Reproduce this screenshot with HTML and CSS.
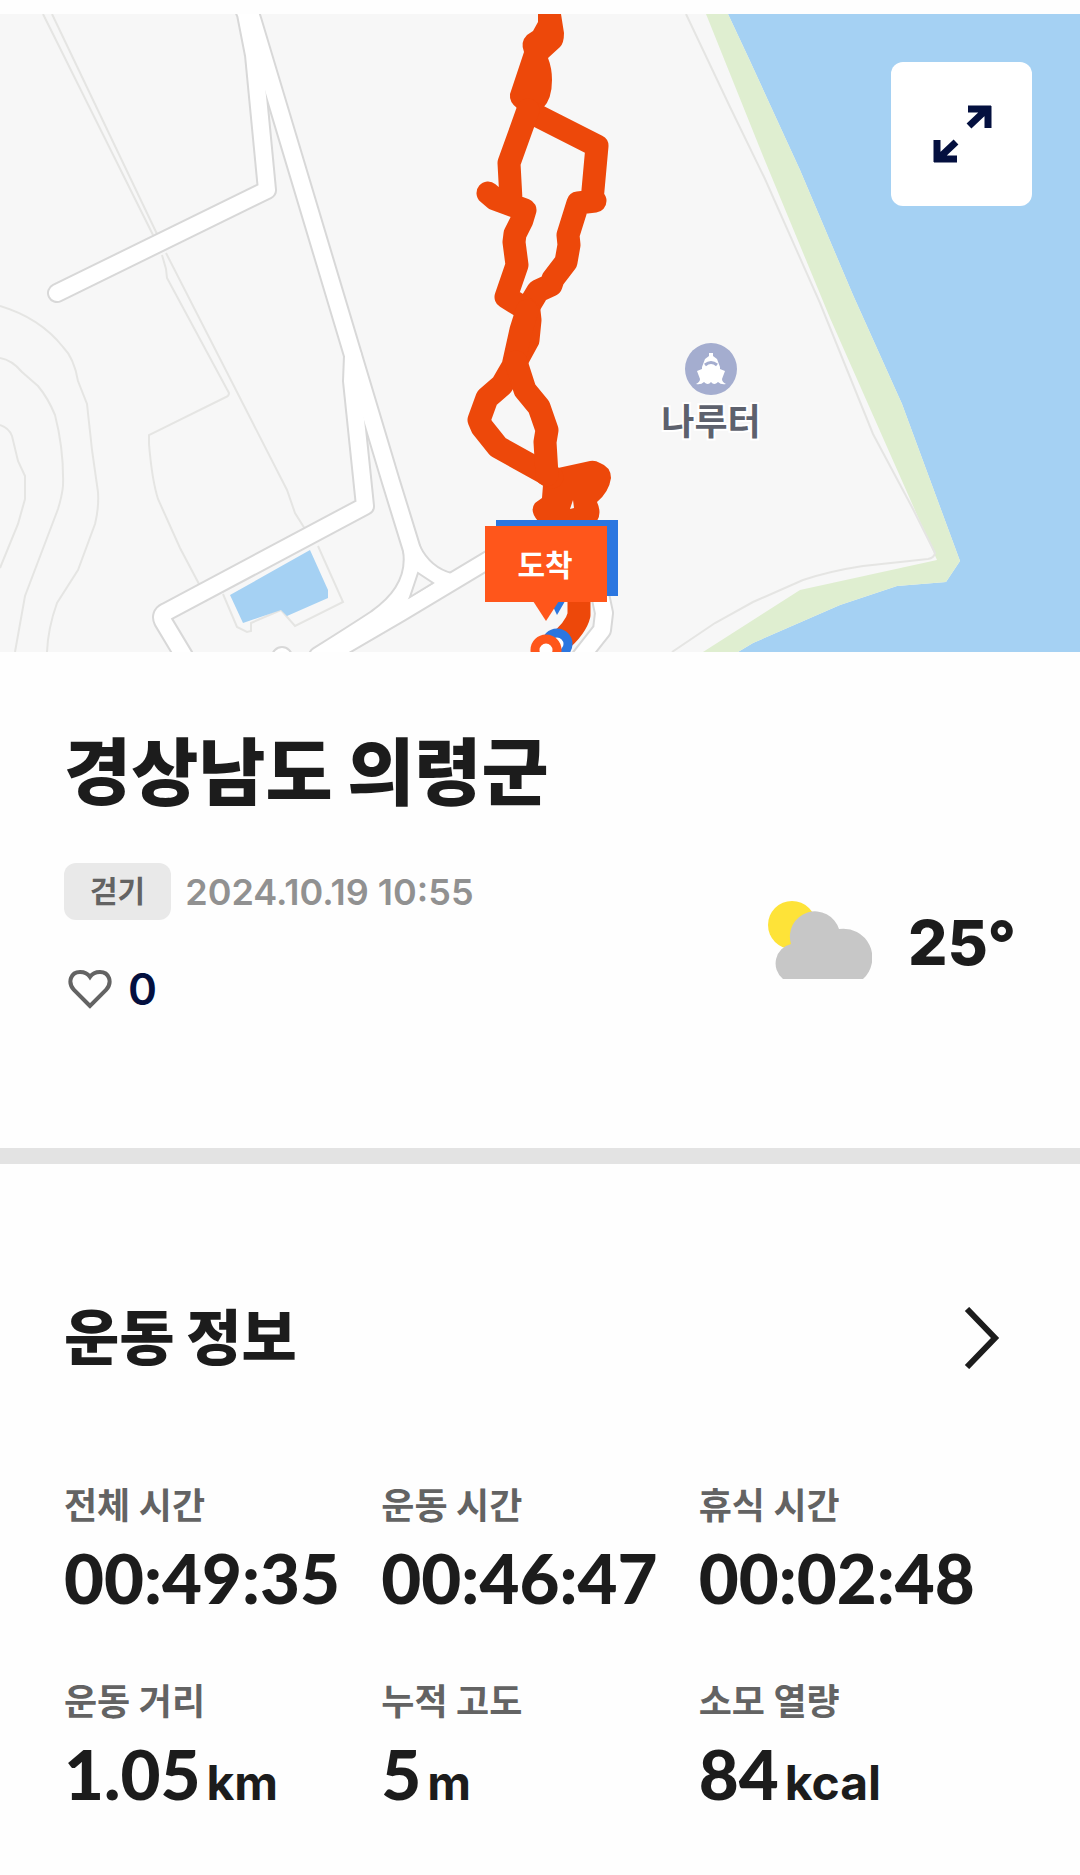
FILE: index.html
```html
<!DOCTYPE html>
<html lang="ko">
<head>
    <meta charset="UTF-8">
    <meta name="viewport" content="width=device-width, initial-scale=1.0">
    <title>경상남도 의령군 - 운동 기록</title>
    <link rel="stylesheet" href="styles.css">
</head>
<body>
    <div class="map">
        <svg class="map-canvas" viewBox="0 14 1080 638" role="img" aria-label="운동 경로 지도">
            <rect class="land" x="0" y="14" width="1080" height="638"/>

            <!-- Water and shore -->
            <path class="water" d="M728 14 L750 61 L800 170 L853 295 L902 404 L960 561 L946 582 L897 586 L840 605 L753 643 L738 652 H1080 V14 Z"/>
            <path class="shore" d="M706 14 H728 L750 61 L800 170 L853 295 L902 404 L960 561 L946 582 L897 586 L840 605 L753 643 L738 652 H703 L800 590 L937 560 L830 318 L763 156 Z"/>

            <!-- Contour lines -->
            <g class="contour">
                <path d="M686 14 L730 107 L765 179 L820 303 L873 434 L913 509 L935 553 Q934 558 928 559 L863 566 Q830 571 803 580 L753 602 L715 623 L672 652"/>
                <path d="M43 14 L153 235 M52 14 L157 234"/>
                <path d="M162 255 L166 269 L167 278 L229 393 Q229 396 226 397 L149 435 L149 444 Q152 480 158 499 L180 548 L199 584"/>
                <path d="M166 253 L287 490 L295 513 L305 529"/>
                <path d="M0 306 Q40 318 63 347 Q74 358 78 381 L87 404 L92 450 L98 492 Q99 508 95 524 L78 570 L57 603 Q48 628 47 652"/>
                <path d="M0 358 Q12 360 22 372 L38 386 Q48 398 55 415 Q64 450 63 486 Q62 496 58 509 L25 596 L15 652"/>
                <path d="M0 425 Q9 428 12 436 L18 461 L25 476 L25 499 L18 524 L0 568"/>
                <path d="M223 594 L237 627 L247 632 L251 631 L251 623 L281 610 L295 626 L343 602 L318 546"/>
            </g>
            <path class="water" d="M230 595 L310 550 L328 590 V598 L287 616 L281 610 L243 623 Z"/>

            <!-- Roads: outline first, then white fill on top -->
            <g class="road-edge">
                <path d="M57 293 L267 190 L254 55 L246 14 L240 0"/>
                <path d="M244 -6 L253 22 L391 482 L412 550 Q424 575 450 582"/>
                <path d="M412 550 Q418 590 376 619 Q350 636 318 656"/>
                <path d="M500 553 L400 613 L326 656"/>
                <path d="M353 356 L352 381 L365 506 L166 612 Q160 615 163 621 L184 656"/>
                <path d="M597 580 L604 613 L602 630 L580 658"/>
                <circle class="road-dot" cx="282" cy="657" r="10"/>
            </g>
            <g class="road">
                <path d="M57 293 L267 190 L254 55 L246 14 L240 0"/>
                <path d="M244 -6 L253 22 L391 482 L412 550 Q424 575 450 582"/>
                <path d="M412 550 Q418 590 376 619 Q350 636 318 656"/>
                <path d="M500 553 L400 613 L326 656"/>
                <path d="M353 356 L352 381 L365 506 L166 612 Q160 615 163 621 L184 656"/>
                <path d="M597 580 L604 613 L602 630 L580 658"/>
            </g>
            <path class="island" d="M418 573 L433 583 L410 597 Z"/>

            <!-- Ferry landing -->
            <circle class="poi" cx="711" cy="369" r="26"/>
            <path class="poi-icon" d="M709 356 V353 H713 V356 L717 359 L720 367 V369 L725 371 L722 379 Q722 382 726 384 Q721 385 718 382 Q714 386 711 382 Q708 386 704 382 Q701 385 696 384 Q700 382 700 379 L697 371 L702 369 V367 L705 359 Z"/>
            <path class="poi-bow" d="M705 365 Q711 360 717 365"/>
            <text class="poi-label" x="711" y="435">나루터</text>

            <!-- Walked route -->
            <path class="route-area" d="M538 14 H561 L564 33 Q564 43 560 47 L548 58 Q552 68 552 80 Q552 99 543 108 L532 120 L517 108 Q509 102 510 94 L524 52 Q520 42 527 35 L533 31 L538 22 Z"/>
            <path class="route-area" d="M558 468 L590 461 Q595 460 600 463 Q611 467 611 478 Q609 492 597 502 Q602 513 597 521 H538 Q529 511 535 503 L542 498 L543 485 L535 470 L547 455 Z"/>
            <path class="route" d="M530 112 L597 146 L592 201 H595 L578 203 L568 235 L569 245 L566 262 L553 279 L551 285 L538 291 L526 311"/>
            <path class="route" d="M528 110 L509 163 L511 200 M488 193 L495 199 L525 210 L522 220 L515 234 L514 242 L517 265 L506 297 L529 311 L530 320 L528 340 L516 362"/>
            <path class="route" d="M527 311 L521 330 L513 366 L502 385 L487 398 L479 420 L482 427 L498 447 L552 477"/>
            <path class="route" d="M516 362 L525 390 L539 407 L547 430 L545 442 L547 475"/>
            <path class="route" d="M579 590 V615 Q576 628 558 643"/>
            <path class="route-gap" d="M573 500 L574 508 L570 509 Z"/>

            <!-- Start marker, mostly hidden under the finish marker -->
            <g class="marker-start">
                <rect x="496" y="520" width="122" height="76"/>
                <path d="M548 596 H568 L557 615 Z"/>
                <circle class="marker-ring" cx="557" cy="644" r="11"/>
            </g>
            <g class="marker-finish">
                <rect x="485" y="526" width="122" height="76"/>
                <path d="M533 601 H559 L546 621 Z"/>
                <circle class="marker-ring" cx="546" cy="650" r="11"/>
            </g>
            <text class="marker-label" x="545" y="576">도착</text>
        </svg>

        <button type="button" class="expand-button" aria-label="지도 크게 보기">
            <svg viewBox="0 0 60 60" width="60" height="60">
                <path d="M36 5 H59 M56 2 V24 M55 5 L37 22"/>
                <path d="M5 36 V58 M2 55 H25 M6 55 L24 38"/>
            </svg>
        </button>
    </div>

    <section class="summary">
        <h1>경상남도 의령군</h1>
        <div class="summary-row">
            <div class="details">
                <div class="activity">
                    <span class="badge">걷기</span>
                    <time datetime="2024-10-19T10:55">2024.10.19 10:55</time>
                </div>
                <button type="button" class="like-button" aria-label="좋아요 0">
                    <svg viewBox="0 0 44 40" width="44" height="40">
                        <path d="M22 37 L6 21 C-1 13 3 3 12 3 C17 3 20 5 22 8 C24 5 27 3 32 3 C41 3 45 13 38 21 Z"/>
                    </svg>
                    <span>0</span>
                </button>
            </div>
            <div class="weather">
                <svg viewBox="0 0 104 78" width="104" height="78" role="img" aria-label="구름 조금">
                    <circle class="sun" cx="24" cy="24" r="24"/>
                    <path class="cloud" d="M15 78 A20 20 0 0 1 23 43 A24 24 0 0 1 71 28 A29 29 0 0 1 95 78 Z"/>
                </svg>
                <span class="temperature">25°</span>
            </div>
        </div>
    </section>

    <section class="workout">
        <div class="workout-header">
            <h2>운동 정보</h2>
            <button type="button" class="more-button" aria-label="운동 정보 더보기">
                <svg viewBox="0 0 36 62" width="36" height="62">
                    <path d="M3 2 L31 31 L3 60"/>
                </svg>
            </button>
        </div>
        <dl class="stats">
            <div>
                <dt>전체 시간</dt>
                <dd>00:49:35</dd>
            </div>
            <div>
                <dt>운동 시간</dt>
                <dd>00:46:47</dd>
            </div>
            <div>
                <dt>휴식 시간</dt>
                <dd>00:02:48</dd>
            </div>
            <div>
                <dt>운동 거리</dt>
                <dd>1.05<span class="unit">km</span></dd>
            </div>
            <div>
                <dt>누적 고도</dt>
                <dd>5<span class="unit">m</span></dd>
            </div>
            <div>
                <dt>소모 열량</dt>
                <dd>84<span class="unit">kcal</span></dd>
            </div>
        </dl>
    </section>
</body>
</html>
```

FILE: styles.css
```css
* {
    box-sizing: border-box;
}

body {
    font-family: Inter, 'Noto Sans CJK KR', sans-serif;
    margin: 0;
    padding-top: 14px;
    background-color: #fefefe;
    color: #1c1c1c;
}

h1, h2, dl, dd {
    margin: 0;
}

button {
    border: none;
    padding: 0;
    background-color: transparent;
    font-family: inherit;
    cursor: pointer;
}

svg {
    display: block;
    flex-shrink: 0;
}

/* Map */
.map {
    position: relative;
}

.map-canvas {
    width: 100%;
    height: auto;
}

.land {
    fill: #f7f7f7;
}

.water {
    fill: #a5d1f3;
}

.shore {
    fill: #dfeed0;
}

.contour {
    fill: none;
    stroke: #e5e5e3;
    stroke-width: 2;
}

.road-edge, .road {
    fill: none;
    stroke-linecap: round;
    stroke-linejoin: round;
}

.road-edge {
    stroke: #d8d8d8;
    stroke-width: 20;
}

.road {
    stroke: #ffffff;
    stroke-width: 16;
}

.road-dot {
    fill: #ffffff;
    stroke-width: 2;
}

.island {
    fill: #f7f7f7;
    stroke: #d8d8d8;
    stroke-width: 2;
}

.poi {
    fill: #a4adcf;
}

.poi-icon {
    fill: #ffffff;
}

.poi-bow {
    fill: none;
    stroke: #a4adcf;
    stroke-width: 3;
}

.poi-label {
    fill: #5d616d;
    stroke: #ffffff;
    stroke-width: 4;
    paint-order: stroke;
    font-size: 36px;
    font-weight: 700;
    text-anchor: middle;
}

.route {
    fill: none;
    stroke: #ed480a;
    stroke-width: 23;
    stroke-linecap: round;
    stroke-linejoin: round;
}

.route-area {
    fill: #ed480a;
}

.route-gap {
    fill: #f7f7f7;
}

.marker-start {
    fill: #2b76e0;
    stroke: #2b76e0;
    stroke-width: 0;
}

.marker-finish {
    fill: #ff561b;
    stroke: #ff561b;
    stroke-width: 0;
}

.marker-ring {
    fill: #ffffff;
    stroke-width: 9;
}

.marker-label {
    fill: #ffffff;
    font-size: 30px;
    font-weight: 700;
    text-anchor: middle;
}

.expand-button {
    position: absolute;
    top: 48px;
    right: 48px;
    display: flex;
    justify-content: center;
    align-items: center;
    width: 141px;
    height: 144px;
    border-radius: 12px;
    background-color: #ffffff;
}

.expand-button path {
    fill: none;
    stroke: #04103f;
    stroke-width: 7;
}

/* Place, date and weather */
.summary {
    padding: 77px 64px 135px;
    border-bottom: 16px solid #e3e3e3;
}

h1 {
    font-size: 73px;
    line-height: 88px;
    font-weight: 900;
}

.summary-row {
    display: flex;
    justify-content: space-between;
    align-items: center;
    margin-top: 46px;
}

.activity {
    display: flex;
    align-items: center;
    gap: 14px;
}

.badge {
    padding: 0 26px;
    border-radius: 12px;
    background-color: #e9e9e9;
    color: #636363;
    font-size: 30px;
    line-height: 57px;
    font-weight: 700;
}

time {
    color: #919191;
    font-size: 36px;
    line-height: 48px;
    font-weight: 600;
}

.like-button {
    display: flex;
    align-items: center;
    gap: 16px;
    margin-top: 45px;
    padding-left: 4px;
    color: #04103f;
    font-size: 44px;
    line-height: 48px;
    font-weight: 600;
}

.like-button path {
    fill: none;
    stroke: #636363;
    stroke-width: 4;
}

.weather {
    display: flex;
    align-items: flex-end;
    gap: 36px;
    padding-top: 4px;
}

.sun {
    fill: #fee338;
}

.cloud {
    fill: #c7c7c7;
}

.temperature {
    font-size: 62px;
    line-height: 72px;
    font-weight: 800;
}

/* Workout stats */
.workout {
    padding: 138px 64px 60px;
}

.workout-header {
    display: flex;
    justify-content: space-between;
    align-items: center;
    padding-right: 16px;
}

h2 {
    font-size: 60px;
    line-height: 72px;
    font-weight: 900;
}

.more-button path {
    fill: none;
    stroke: #1c1c1c;
    stroke-width: 6;
}

.stats {
    display: grid;
    grid-template-columns: repeat(3, 1fr);
    row-gap: 64px;
    margin-top: 108px;
}

dt {
    color: #636363;
    font-size: 36px;
    line-height: 48px;
    font-weight: 700;
}

dd {
    margin-top: 12px;
    font-family: Lato, 'Noto Sans CJK KR', sans-serif;
    font-size: 69px;
    line-height: 72px;
    font-weight: 900;
    white-space: nowrap;
}

.unit {
    margin-left: 6px;
    font-family: Inter, sans-serif;
    font-size: 48px;
    font-weight: 700;
}
```
